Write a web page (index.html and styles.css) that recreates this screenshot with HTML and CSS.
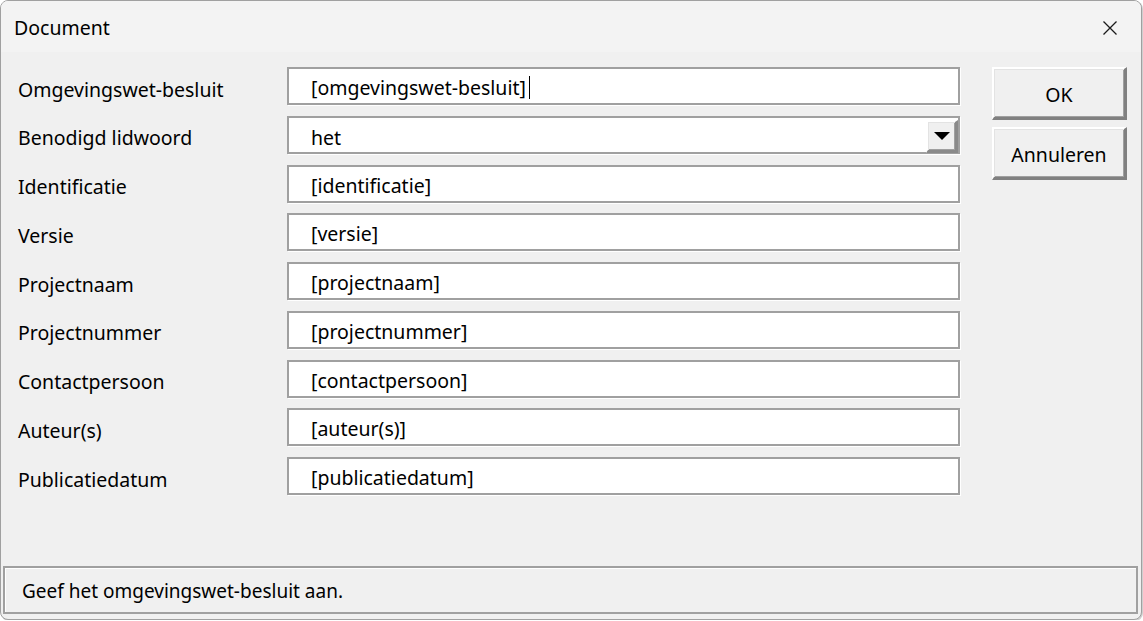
FILE: index.html
```html
<!DOCTYPE html>
<html lang="nl">
<head>
<meta charset="utf-8">
<title>Document</title>
<link rel="stylesheet" href="styles.css">
</head>
<body>
<div class="window">
  <div class="titlebar">
    <span class="title">Document</span>
    <span class="close">
      <svg width="16" height="16" viewBox="0 0 16 16"><path d="M1.5 1.5 L14.5 14.5 M14.5 1.5 L1.5 14.5" stroke="#1a1a1a" stroke-width="1.3" fill="none"/></svg>
    </span>
  </div>
  <div class="content">
    <div class="main">
      <div class="form">
        <div class="label">Omgevingswet-besluit</div>
        <div class="field"><span class="value">[omgevingswet-besluit]</span><span class="caret"></span></div>
        <div class="label">Benodigd lidwoord</div>
        <div class="field select"><span class="value">het</span><span class="dropbtn"><svg width="16" height="8" viewBox="0 0 16 8"><path d="M0 0 H16 L8 8 Z" fill="#000"/></svg></span></div>
        <div class="label">Identificatie</div>
        <div class="field"><span class="value">[identificatie]</span></div>
        <div class="label">Versie</div>
        <div class="field"><span class="value">[versie]</span></div>
        <div class="label">Projectnaam</div>
        <div class="field"><span class="value">[projectnaam]</span></div>
        <div class="label">Projectnummer</div>
        <div class="field"><span class="value">[projectnummer]</span></div>
        <div class="label">Contactpersoon</div>
        <div class="field"><span class="value">[contactpersoon]</span></div>
        <div class="label">Auteur(s)</div>
        <div class="field"><span class="value">[auteur(s)]</span></div>
        <div class="label">Publicatiedatum</div>
        <div class="field"><span class="value">[publicatiedatum]</span></div>
      </div>
      <div class="buttons">
        <div class="btn">OK</div>
        <div class="btn">Annuleren</div>
      </div>
    </div>
    <div class="status">Geef het omgevingswet-besluit aan.</div>
  </div>
</div>
</body>
</html>
```
FILE: styles.css
```css
html, body {
  margin: 0;
  padding: 0;
  background: #ffffff;
}
body {
  font-family: "Noto Sans", "Open Sans", sans-serif;
  font-size: 19.5px;
  color: #000;
}
.window {
  width: 1142px;
  height: 620px;
  box-sizing: border-box;
  border: 1px solid #a0a0a0;
  border-radius: 8px;
  background: #f0f0f0;
  overflow: hidden;
  display: flex;
  flex-direction: column;
  box-shadow: 1px 1px 0 #cfcfcf;
}
.titlebar {
  height: 51px;
  flex: none;
  background: #f3f3f3;
  display: flex;
  align-items: center;
  justify-content: space-between;
  padding: 0 22px 0 13px;
}
.title {
  font-size: 19.5px;
  margin-top: 1px;
}
.close {
  display: flex;
  width: 16px;
  height: 16px;
  margin-top: 2px;
  margin-right: 1px;
}
.content {
  flex: 1;
  display: flex;
  flex-direction: column;
  justify-content: space-between;
  padding: 15px 3px 5px 2px;
}
.main {
  display: flex;
  align-items: flex-start;
}
.form {
  display: grid;
  grid-template-columns: 269px 673px;
  grid-auto-rows: 38px;
  row-gap: 10.75px;
  padding-left: 15px;
}
.label {
  display: flex;
  align-items: center;
  padding-top: 6px;
  white-space: nowrap;
}
.field {
  box-sizing: border-box;
  height: 38px;
  background: #fff;
  border: 2px solid #a0a0a0;
  box-shadow: 1px 1px 0 #ffffff;
  display: flex;
  align-items: center;
  padding-left: 22px;
  padding-top: 3px;
}
.value {
  white-space: nowrap;
}
.caret {
  width: 1px;
  height: 23px;
  background: #000;
  margin-left: 3px;
}
.select {
  padding-right: 0;
  padding-top: 0;
}
.select .value {
  flex: 1;
  padding-top: 5px;
}
.dropbtn {
  box-sizing: border-box;
  width: 32px;
  height: 33px;
  align-self: flex-start;
  margin-top: 2px;
  background: #f0f0f0;
  border-style: solid;
  border-width: 2px 3px 3px 2px;
  border-color: #ffffff #8a8a8a #8a8a8a #ffffff;
  box-shadow: inset 1px 1px 0 #e3e3e3, inset -1px -1px 0 #a0a0a0;
  display: flex;
  align-items: center;
  justify-content: center;
}
.buttons {
  margin-left: 32px;
  display: flex;
  flex-direction: column;
  gap: 7px;
}
.btn {
  box-sizing: border-box;
  width: 135px;
  height: 53px;
  background: #f0f0f0;
  border-style: solid;
  border-width: 2px 3px 3px 2px;
  border-color: #ffffff #808080 #808080 #ffffff;
  box-shadow: inset 1px 1px 0 #e3e3e3, inset -1px -1px 0 #a0a0a0;
  display: flex;
  align-items: center;
  justify-content: center;
  padding-top: 2px;
}
.status {
  box-sizing: border-box;
  height: 48px;
  border: 2px solid #a0a0a0;
  box-shadow: inset 1px 1px 0 #ffffff;
  display: flex;
  align-items: center;
  padding-left: 17px;
  padding-top: 2px;
  font-size: 19px;
}
```
